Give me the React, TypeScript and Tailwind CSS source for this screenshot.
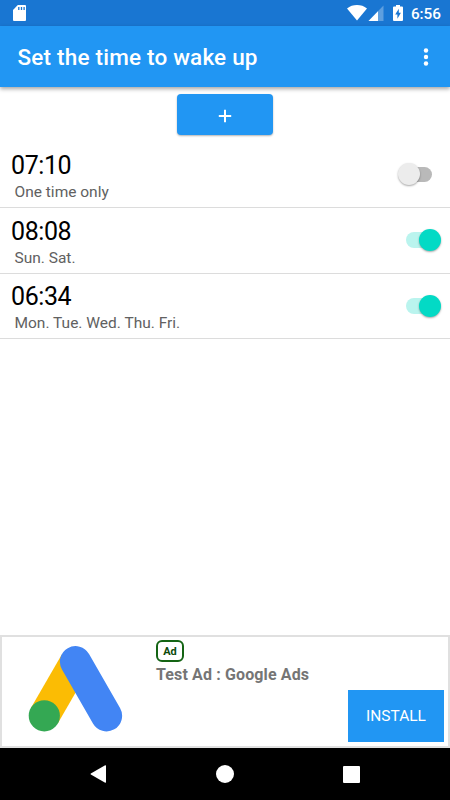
import { useState } from "react";
import clsx from "clsx";

interface Alarm {
  id: number;
  time: string;
  repeat: string;
  enabled: boolean;
}

const initialAlarms: Alarm[] = [
  { id: 1, time: "07:10", repeat: "One time only", enabled: false },
  { id: 2, time: "08:08", repeat: "Sun. Sat.", enabled: true },
  { id: 3, time: "06:34", repeat: "Mon. Tue. Wed. Thu. Fri.", enabled: true },
];

export default function App() {
  const [alarms, setAlarms] = useState<Alarm[]>(initialAlarms);

  const toggleAlarm = (id: number) => {
    setAlarms((prev) =>
      prev.map((a) => (a.id === id ? { ...a, enabled: !a.enabled } : a))
    );
  };

  return (
    <div className="flex h-[800px] w-[450px] flex-col overflow-hidden bg-white font-[Roboto,sans-serif]">
      <StatusBar />

      {/* App bar */}
      <header className="z-10 flex h-[61px] shrink-0 items-center justify-between bg-[#2196f3] pt-[3px] pr-[19px] pl-[17.5px] shadow-[0_2px_4px_rgba(0,0,0,0.35)]">
        <h1 className="text-[22.5px] font-medium tracking-[0.2px] whitespace-nowrap text-white">
          Set the time to wake up
        </h1>
        <button aria-label="More options">
          <svg width="10" height="20" viewBox="0 0 10 20" fill="#fff">
            <circle cx="5" cy="2.5" r="2.2" />
            <circle cx="5" cy="9" r="2.2" />
            <circle cx="5" cy="15.5" r="2.2" />
          </svg>
        </button>
      </header>

      {/* Alarm list */}
      <main className="flex flex-1 flex-col">
        <div className="flex h-[55px] justify-center pt-[7px]">
          <button
            aria-label="Add alarm"
            className="flex h-[41px] w-24 items-center justify-center rounded-[4px] bg-[#2196f3] pt-[3px] shadow-[0_1px_2px_rgba(0,0,0,0.3)]"
          >
            <svg width="14" height="14" viewBox="0 0 14 14" fill="none">
              <path
                d="M7 0.8V13.2M0.8 7H13.2"
                stroke="#fff"
                strokeWidth="2"
              />
            </svg>
          </button>
        </div>
        <ul>
          {alarms.map((alarm) => (
            <AlarmRow
              key={alarm.id}
              alarm={alarm}
              onToggle={() => toggleAlarm(alarm.id)}
            />
          ))}
        </ul>
      </main>

      <AdBanner />
      <NavBar />
    </div>
  );
}

function StatusBar() {
  return (
    <div className="flex h-[26px] shrink-0 items-center justify-between bg-[#1976d2] pr-[9px] pl-[13px] text-white">
      <svg width="13" height="16" viewBox="0 0 13 16">
        <path
          d="M4.8 0H12Q13 0 13 1V15Q13 16 12 16H1Q0 16 0 15V5Z"
          fill="#fff"
        />
        <path
          d="M5.8 2V5M8.5 2V5M11.1 2V5"
          stroke="#1976d2"
          strokeWidth="1.3"
        />
      </svg>
      <div className="flex items-center">
        <svg width="20" height="16" viewBox="0 0 20 16" fill="#fff">
          <path d="M0 3.4C5.6 -1.1 14.4 -1.1 20 3.4L10 15.6Z" />
        </svg>
        <svg className="ml-[1px]" width="16" height="16" viewBox="0 0 16 16">
          <path d="M0.5 16L15.5 0.5V16Z" fill="#fff" fillOpacity="0.3" />
          <path d="M0.5 16L10 6.2V16Z" fill="#fff" />
        </svg>
        <svg className="ml-[9px]" width="10" height="16" viewBox="0 0 10 16">
          <path
            d="M3 0H7V1.5H9Q10 1.5 10 2.5V15Q10 16 9 16H1Q0 16 0 15V2.5Q0 1.5 1 1.5H3Z"
            fill="#fff"
          />
          <path d="M5.8 3.8L2.2 9.5H4.4V13.7L7.9 7.8H5.8Z" fill="#1976d2" />
        </svg>
        <span className="ml-[7.5px] pt-[3px] text-[15.3px] leading-none font-medium">
          6:56
        </span>
      </div>
    </div>
  );
}

function AlarmRow({
  alarm,
  onToggle,
}: {
  alarm: Alarm;
  onToggle: () => void;
}) {
  return (
    <li className="flex h-[65.8px] items-center justify-between border-b-[1.5px] border-[#dcdcdc] pr-[9.5px] pl-[11px]">
      <div className="pt-[7px]">
        <div className="text-[25px] leading-7 tracking-[-0.4px] text-black">
          {alarm.time}
        </div>
        <div className="pl-[3.5px] text-[15.5px] leading-6 text-[#616161]">
          {alarm.repeat}
        </div>
      </div>
      <Toggle checked={alarm.enabled} onChange={onToggle} />
    </li>
  );
}

function Toggle({
  checked,
  onChange,
}: {
  checked: boolean;
  onChange: () => void;
}) {
  return (
    <button
      role="switch"
      aria-checked={checked}
      onClick={onChange}
      className="relative flex h-[22px] w-[43px] items-center justify-center"
    >
      <span
        className={clsx(
          "h-[15.5px] w-[26px] rounded-full",
          checked ? "bg-[#baf4ee]" : "bg-[#b9b9b9]"
        )}
      />
      <span
        className={clsx(
          "absolute top-0 size-[22px] rounded-full shadow-[0_1px_2px_rgba(0,0,0,0.35)]",
          checked ? "right-0 bg-[#03dac5]" : "left-0 bg-[#ececec]"
        )}
      />
    </button>
  );
}

function AdBanner() {
  return (
    <section className="flex h-[113px] shrink-0 border-2 border-[#e0e0e0] bg-white">
      {/* Google Ads logo */}
      <svg
        className="mt-[9px] ml-[26px] shrink-0"
        width="95"
        height="87"
        viewBox="0 0 95 87"
        fill="none"
      >
        <path d="M47.5 15.7L16.3 69.8" stroke="#fbbc04" strokeWidth="31" />
        <path
          d="M47.5 15.7L78.5 69.8"
          stroke="#4285f4"
          strokeWidth="31.2"
          strokeLinecap="round"
        />
        <circle cx="16.3" cy="69.8" r="15.6" fill="#34a853" />
      </svg>
      <div className="flex flex-1 flex-col pt-[3px] pr-1 pl-[33px]">
        <div className="flex h-[22px] w-7 items-center justify-center rounded-[6px] border-2 border-[#146414] pt-[2px] text-[11px] font-bold text-[#0b4a0b]">
          Ad
        </div>
        <div className="pt-px text-base leading-6 font-bold tracking-[0.13px] text-[#757575]">
          Test Ad : Google Ads
        </div>
        <button className="mt-[3px] h-[52px] w-24 self-end bg-[#2196f3] pt-[2px] text-[15.5px] text-white">
          INSTALL
        </button>
      </div>
    </section>
  );
}

function NavBar() {
  return (
    <nav className="flex h-[52px] shrink-0 items-center justify-between bg-black px-[90px]">
      <button aria-label="Back">
        <svg width="17" height="18" viewBox="0 0 17 18" fill="#fff">
          <path d="M15.2 0.3Q16 0 16 1V17Q16 18 15.2 17.7L0.8 9.5Q0.2 9 0.8 8.5Z" />
        </svg>
      </button>
      <button aria-label="Home">
        <svg width="18" height="18" viewBox="0 0 18 18" fill="#fff">
          <circle cx="9" cy="9" r="9" />
        </svg>
      </button>
      <button aria-label="Recent apps">
        <svg width="17" height="17" viewBox="0 0 17 17" fill="#fff">
          <rect width="17" height="17" rx="1" />
        </svg>
      </button>
    </nav>
  );
}
